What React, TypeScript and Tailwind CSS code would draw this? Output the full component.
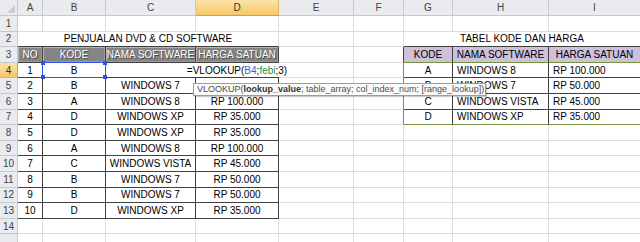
import type { ReactNode } from "react";

type Line = "grid" | "dark" | "green" | "head";

const RIGHT: Record<Line, string> = {
    grid: "border-r border-r-[#dadcdd]",
    dark: "border-r border-r-[#404040]",
    green: "border-r border-r-[#77933c]",
    head: "border-r border-r-[#c5c9cf]",
};

const BOTTOM: Record<Line, string> = {
    grid: "border-b border-b-[#dadcdd]",
    dark: "border-b border-b-[#404040]",
    green: "border-b border-b-[#77933c]",
    head: "border-b border-b-[#c5c9cf]",
};

// column widths A..I
const W = {
    A: "w-[25px]",
    B: "w-[63px]",
    C: "w-[90px]",
    D: "w-[83px]",
    E: "w-[75px]",
    F: "w-[50px]",
    G: "w-[49px]",
    H: "w-[96px]",
    I: "w-[92px]",
};

const sales = [
    ["1", "B", "", ""],
    ["2", "B", "WINDOWS 7", ""],
    ["3", "A", "WINDOWS 8", "RP 100.000"],
    ["4", "D", "WINDOWS XP", "RP 35.000"],
    ["5", "D", "WINDOWS XP", "RP 35.000"],
    ["6", "A", "WINDOWS 8", "RP 100.000"],
    ["7", "C", "WINDOWS VISTA", "RP 45.000"],
    ["8", "B", "WINDOWS 7", "RP 50.000"],
    ["9", "B", "WINDOWS 7", "RP 50.000"],
    ["10", "D", "WINDOWS XP", "RP 35.000"],
];

const codes = [
    ["A", "WINDOWS 8", "RP 100.000"],
    ["B", "WINDOWS 7", "RP 50.000"],
    ["C", "WINDOWS VISTA", "RP 45.000"],
    ["D", "WINDOWS XP", "RP 35.000"],
];

interface CellProps {
    w: string;
    r?: Line;
    b?: Line;
    cls?: string;
    left?: boolean;
    children?: ReactNode;
}

const Cell = ({ w, r = "grid", b = "grid", cls = "", left = false, children }: CellProps) => (
    <div
        className={`${w} ${RIGHT[r]} ${BOTTOM[b]} ${cls} ${left ? "justify-start pl-[4px]" : "justify-center"} relative flex shrink-0 items-center whitespace-nowrap pt-px`}>
        {children}
    </div>
);

const RowHead = ({ n, active = false }: { n?: number; active?: boolean }) => (
    <div
        className={`w-[18px] shrink-0 flex items-center justify-center border-b pt-px ${active
            ? "bg-linear-to-b from-[#fbe3a6] to-[#f6c766] text-[#333] border-r border-r-[#f29436] border-b-[#e8b25a]"
            : "bg-[#e9ebee] text-[#444] border-r border-r-[#c5c9cf] border-b-[#c5c9cf]"}`}>
        {n}
    </div>
);

const BlankRow = () => (
    <>
        <Cell w={W.A} />
        <Cell w={W.B} />
        <Cell w={W.C} />
        <Cell w={W.D} />
        <Cell w={W.E} />
        <Cell w={W.F} />
        <Cell w={W.G} />
        <Cell w={W.H} />
        <Cell w={W.I} />
    </>
);

const App = () => {
    const headers = ["A", "B", "C", "D", "E", "F", "G", "H", "I"] as const;

    return (
        <div className="relative w-[640px] h-[242px] overflow-hidden bg-white text-[10px] leading-none text-black font-['Liberation_Sans',Arial,sans-serif]">
            {/* column headers */}
            <div className="flex h-[16px]">
                <div className="w-[18px] shrink-0 bg-[#e9ebee] border-r border-b border-[#c5c9cf] relative">
                    <span className="absolute right-[2px] bottom-[2px] w-0 h-0 border-l-[8px] border-l-transparent border-b-[8px] border-b-[#c9ccd1]" />
                </div>
                {headers.map((h) => (
                    <div
                        key={h}
                        className={`${W[h]} shrink-0 flex items-center justify-center pt-px border-r border-b ${h === "D"
                            ? "bg-linear-to-b from-[#fbe3a6] to-[#f6c766] text-[#333] border-r-[#e8b25a] border-b-[#f29436]"
                            : "bg-[#e9ebee] text-[#444] border-r-[#c5c9cf] border-b-[#c5c9cf]"}`}>
                        {h}
                    </div>
                ))}
            </div>

            {/* row 1 */}
            <div className="flex h-[15.6px]">
                <RowHead n={1} />
                <BlankRow />
            </div>

            {/* row 2 - titles */}
            <div className="flex h-[15.6px]">
                <RowHead n={2} />
                <Cell w="w-[261px]" b="dark">PENJUALAN DVD &amp; CD SOFTWARE</Cell>
                <Cell w={W.E} />
                <Cell w={W.F} />
                <Cell w="w-[237px]" b="dark">TABEL KODE DAN HARGA</Cell>
            </div>

            {/* row 3 - table headers */}
            <div className="flex h-[15.6px]">
                <RowHead n={3} />
                {[
                    [W.A, "NO"],
                    [W.B, "KODE"],
                    [W.C, "NAMA SOFTWARE"],
                    [W.D, "HARGA SATUAN"],
                ].map(([w, t]) => (
                    <Cell
                        key={t}
                        w={w}
                        r="dark"
                        b="dark"
                        cls="bg-[#858585] text-white shadow-[inset_1px_1px_0_#b4b4b4,inset_-1px_-1px_0_#9a9a9a] [text-shadow:1px_1px_0_#4a4a4a]">
                        {t}
                    </Cell>
                ))}
                <Cell w={W.E} />
                <Cell w={W.F} r="dark" />
                <Cell w={W.G} r="dark" b="green" cls="bg-[#ccc0da]">KODE</Cell>
                <Cell w={W.H} r="dark" b="green" cls="bg-[#ccc0da]">NAMA SOFTWARE</Cell>
                <Cell w={W.I} r="dark" b="green" cls="bg-[#ccc0da]">HARGA SATUAN</Cell>
            </div>

            {/* rows 4 - 13 */}
            {sales.map((s, i) => {
                const n = i + 4;
                const code = codes[i];
                return (
                    <div key={n} className="flex h-[15.6px]">
                        <RowHead n={n} active={n === 4} />
                        <Cell w={W.A} r="dark" b="dark">{s[0]}</Cell>
                        <Cell w={W.B} r="dark" b="dark">
                            {s[1]}
                            {n === 4 && (
                                <div className="absolute -left-px -top-px -right-px -bottom-px border border-[#3050f0]">
                                    <span className="absolute -left-[2px] -top-[2px] w-[4px] h-[4px] bg-[#3050f0]" />
                                    <span className="absolute -right-[2px] -top-[2px] w-[4px] h-[4px] bg-[#3050f0]" />
                                    <span className="absolute -left-[2px] -bottom-[2px] w-[4px] h-[4px] bg-[#3050f0]" />
                                    <span className="absolute -right-[2px] -bottom-[2px] w-[4px] h-[4px] bg-[#3050f0]" />
                                </div>
                            )}
                        </Cell>
                        <Cell w={W.C} r="dark" b="dark">{s[2]}</Cell>
                        <Cell w={W.D} r="dark" b="dark">
                            {s[3]}
                            {n === 4 && (
                                <span className="absolute z-10 left-1/2 -translate-x-1/2 top-0 bottom-0 flex items-center bg-white px-[2px] pt-px">
                                    =VLOOKUP(<span className="text-[#3a5cd8]">B4</span>;<span className="text-[#2f8a3c]">febi</span>;3)
                                </span>
                            )}
                        </Cell>
                        <Cell w={W.E} />
                        {code ? (
                            <>
                                <Cell w={W.F} r="green" />
                                <Cell w={W.G} r="dark" b={n === 7 ? "green" : "dark"}>{code[0]}</Cell>
                                <Cell w={W.H} r="dark" b={n === 7 ? "green" : "dark"} left>{code[1]}</Cell>
                                <Cell w={W.I} r="green" b={n === 7 ? "green" : "dark"} left>{code[2]}</Cell>
                            </>
                        ) : (
                            <>
                                <Cell w={W.F} />
                                <Cell w={W.G} />
                                <Cell w={W.H} />
                                <Cell w={W.I} />
                            </>
                        )}
                    </div>
                );
            })}

            {/* row 14 and the top of row 15 */}
            <div className="flex h-[15.6px]">
                <RowHead n={14} />
                <BlankRow />
            </div>
            <div className="flex h-[15.6px]">
                <RowHead />
                <BlankRow />
            </div>

            {/* function tooltip */}
            <div className="absolute left-[193px] top-[83px] w-[293px] h-[13px] z-20 flex items-center pl-[3px] border border-[#9c9c9c] bg-[#fbfbfb] text-[9px] text-[#4d4d4d] whitespace-nowrap shadow-[1px_1px_1px_rgba(0,0,0,0.2)]">
                VLOOKUP(<b className="font-bold text-[#333]">lookup_value</b>; table_array; col_index_num; [range_lookup])
            </div>
        </div>
    );
};

export default App;
